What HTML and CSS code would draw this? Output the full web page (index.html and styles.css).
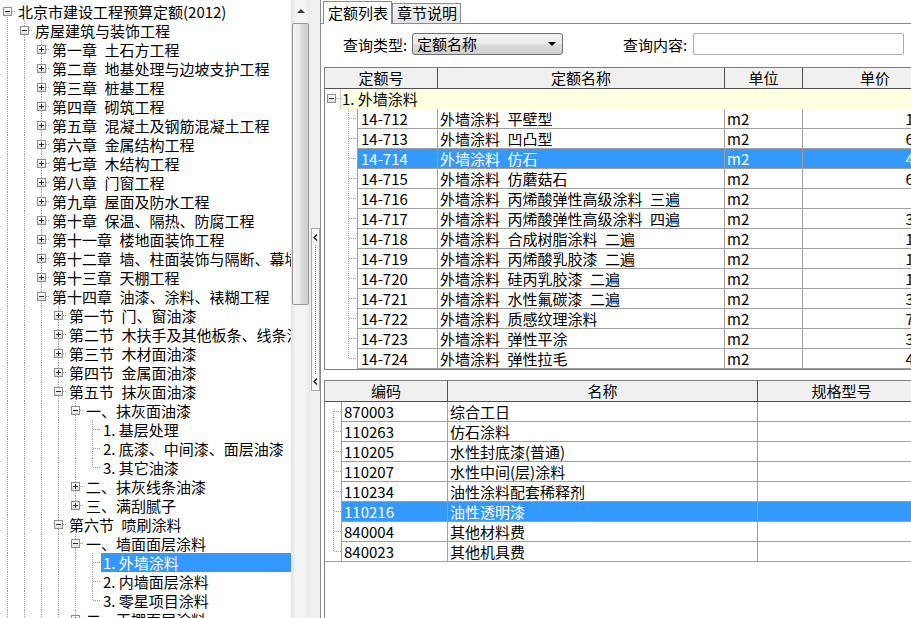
FILE: index.html
```html
<!DOCTYPE html>
<html lang="zh-CN">
<head>
<meta charset="utf-8">
<title>北京市建设工程预算定额</title>
<link rel="stylesheet" href="styles.css">
</head>
<body>
<div class="app">
  <div class="left">
    <div class="tree">
      <div class="row"><i class="n tl b"><b class="box minus"></b></i><span class="lbl">北京市建设工程预算定额(2012)</span></div>
      <div class="row"><i class="g on"></i><i class="n tl tb"><b class="box minus"></b></i><span class="lbl">房屋建筑与装饰工程</span></div>
      <div class="row"><i class="g on"></i><i class="g on"></i><i class="n tl tb"><b class="box plus"></b></i><span class="lbl">第一章&ensp;土石方工程</span></div>
      <div class="row"><i class="g on"></i><i class="g on"></i><i class="n tl tb"><b class="box plus"></b></i><span class="lbl">第二章&ensp;地基处理与边坡支护工程</span></div>
      <div class="row"><i class="g on"></i><i class="g on"></i><i class="n tl tb"><b class="box plus"></b></i><span class="lbl">第三章&ensp;桩基工程</span></div>
      <div class="row"><i class="g on"></i><i class="g on"></i><i class="n tl tb"><b class="box plus"></b></i><span class="lbl">第四章&ensp;砌筑工程</span></div>
      <div class="row"><i class="g on"></i><i class="g on"></i><i class="n tl tb"><b class="box plus"></b></i><span class="lbl">第五章&ensp;混凝土及钢筋混凝土工程</span></div>
      <div class="row"><i class="g on"></i><i class="g on"></i><i class="n tl tb"><b class="box plus"></b></i><span class="lbl">第六章&ensp;金属结构工程</span></div>
      <div class="row"><i class="g on"></i><i class="g on"></i><i class="n tl tb"><b class="box plus"></b></i><span class="lbl">第七章&ensp;木结构工程</span></div>
      <div class="row"><i class="g on"></i><i class="g on"></i><i class="n tl tb"><b class="box plus"></b></i><span class="lbl">第八章&ensp;门窗工程</span></div>
      <div class="row"><i class="g on"></i><i class="g on"></i><i class="n tl tb"><b class="box plus"></b></i><span class="lbl">第九章&ensp;屋面及防水工程</span></div>
      <div class="row"><i class="g on"></i><i class="g on"></i><i class="n tl tb"><b class="box plus"></b></i><span class="lbl">第十章&ensp;保温、隔热、防腐工程</span></div>
      <div class="row"><i class="g on"></i><i class="g on"></i><i class="n tl tb"><b class="box plus"></b></i><span class="lbl">第十一章&ensp;楼地面装饰工程</span></div>
      <div class="row"><i class="g on"></i><i class="g on"></i><i class="n tl tb"><b class="box plus"></b></i><span class="lbl">第十二章&ensp;墙、柱面装饰与隔断、幕墙工程</span></div>
      <div class="row"><i class="g on"></i><i class="g on"></i><i class="n tl tb"><b class="box plus"></b></i><span class="lbl">第十三章&ensp;天棚工程</span></div>
      <div class="row"><i class="g on"></i><i class="g on"></i><i class="n tl tb"><b class="box minus"></b></i><span class="lbl">第十四章&ensp;油漆、涂料、裱糊工程</span></div>
      <div class="row"><i class="g on"></i><i class="g on"></i><i class="g on"></i><i class="n tl tb"><b class="box plus"></b></i><span class="lbl">第一节&ensp;门、窗油漆</span></div>
      <div class="row"><i class="g on"></i><i class="g on"></i><i class="g on"></i><i class="n tl tb"><b class="box plus"></b></i><span class="lbl">第二节&ensp;木扶手及其他板条、线条油漆</span></div>
      <div class="row"><i class="g on"></i><i class="g on"></i><i class="g on"></i><i class="n tl tb"><b class="box plus"></b></i><span class="lbl">第三节&ensp;木材面油漆</span></div>
      <div class="row"><i class="g on"></i><i class="g on"></i><i class="g on"></i><i class="n tl tb"><b class="box plus"></b></i><span class="lbl">第四节&ensp;金属面油漆</span></div>
      <div class="row"><i class="g on"></i><i class="g on"></i><i class="g on"></i><i class="n tl tb"><b class="box minus"></b></i><span class="lbl">第五节&ensp;抹灰面油漆</span></div>
      <div class="row"><i class="g on"></i><i class="g on"></i><i class="g on"></i><i class="g on"></i><i class="n tl tb"><b class="box minus"></b></i><span class="lbl">一、抹灰面油漆</span></div>
      <div class="row"><i class="g on"></i><i class="g on"></i><i class="g on"></i><i class="g on"></i><i class="g on"></i><i class="n tl tb"></i><span class="lbl">1. 基层处理</span></div>
      <div class="row"><i class="g on"></i><i class="g on"></i><i class="g on"></i><i class="g on"></i><i class="g on"></i><i class="n tl tb"></i><span class="lbl">2. 底漆、中间漆、面层油漆</span></div>
      <div class="row"><i class="g on"></i><i class="g on"></i><i class="g on"></i><i class="g on"></i><i class="g on"></i><i class="n tl t"></i><span class="lbl">3. 其它油漆</span></div>
      <div class="row"><i class="g on"></i><i class="g on"></i><i class="g on"></i><i class="g on"></i><i class="n tl tb"><b class="box plus"></b></i><span class="lbl">二、抹灰线条油漆</span></div>
      <div class="row"><i class="g on"></i><i class="g on"></i><i class="g on"></i><i class="g on"></i><i class="n tl t"><b class="box plus"></b></i><span class="lbl">三、满刮腻子</span></div>
      <div class="row"><i class="g on"></i><i class="g on"></i><i class="g on"></i><i class="n tl tb"><b class="box minus"></b></i><span class="lbl">第六节&ensp;喷刷涂料</span></div>
      <div class="row"><i class="g on"></i><i class="g on"></i><i class="g on"></i><i class="g on"></i><i class="n tl tb"><b class="box minus"></b></i><span class="lbl">一、墙面面层涂料</span></div>
      <div class="row sel"><i class="g on"></i><i class="g on"></i><i class="g on"></i><i class="g on"></i><i class="g on"></i><i class="n tl tb"></i><span class="lbl">1. 外墙涂料</span></div>
      <div class="row"><i class="g on"></i><i class="g on"></i><i class="g on"></i><i class="g on"></i><i class="g on"></i><i class="n tl tb"></i><span class="lbl">2. 内墙面层涂料</span></div>
      <div class="row"><i class="g on"></i><i class="g on"></i><i class="g on"></i><i class="g on"></i><i class="g on"></i><i class="n tl t"></i><span class="lbl">3. 零星项目涂料</span></div>
      <div class="row"><i class="g on"></i><i class="g on"></i><i class="g on"></i><i class="g on"></i><i class="n tl tb"><b class="box plus"></b></i><span class="lbl">二、天棚面层涂料</span></div>
    </div>
    <div class="vscroll">
      <div class="sb-up"><span class="tri-up"></span></div>
      <div class="sb-thumb"></div>
    </div>
  </div>

  <div class="splitter">
    <div class="split-btn">
      <svg width="5" height="7" viewBox="0 0 5 7"><path d="M4 0.5 L1 3.5 L4 6.5" stroke="#1a1a1a" stroke-width="1.4" fill="none"/></svg>
      <span class="split-dots"></span>
      <svg width="5" height="7" viewBox="0 0 5 7"><path d="M4 0.5 L1 3.5 L4 6.5" stroke="#1a1a1a" stroke-width="1.4" fill="none"/></svg>
    </div>
  </div>

  <div class="right">
    <div class="tabs">
      <div class="tab active">定额列表</div>
      <div class="tab">章节说明</div>
    </div>
    <div class="tabpanel">
      <div class="query">
        <span class="qlabel">查询类型:</span>
        <div class="combo"><span class="combo-text">定额名称</span><span class="tri-down"></span></div>
        <span class="qlabel qlabel2">查询内容:</span>
        <div class="qinput"></div>
      </div>

      <div class="grid grid-top">
        <div class="hdr">
          <div class="hc" style="width:113px">定额号</div>
          <div class="hc" style="width:287px">定额名称</div>
          <div class="hc" style="width:78px">单位</div>
          <div class="hc" style="width:145px">单价</div>
        </div>
        <div class="grp">
          <div class="gtree"><b class="box minus"></b></div>
          <div class="gcell">1. 外墙涂料</div>
        </div>
        <div class="dr"><i class="tt tl tb"></i><div class="c code">14-712</div><div class="c name">外墙涂料&ensp;平壁型</div><div class="c unit">m2</div><div class="c price">14.76</div></div>
        <div class="dr"><i class="tt tl tb"></i><div class="c code">14-713</div><div class="c name">外墙涂料&ensp;凹凸型</div><div class="c unit">m2</div><div class="c price">63.85</div></div>
        <div class="dr sel"><i class="tt tl tb"></i><div class="c code">14-714</div><div class="c name">外墙涂料&ensp;仿石</div><div class="c unit">m2</div><div class="c price">45.21</div></div>
        <div class="dr"><i class="tt tl tb"></i><div class="c code">14-715</div><div class="c name">外墙涂料&ensp;仿蘑菇石</div><div class="c unit">m2</div><div class="c price">68.04</div></div>
        <div class="dr"><i class="tt tl tb"></i><div class="c code">14-716</div><div class="c name">外墙涂料&ensp;丙烯酸弹性高级涂料&ensp;三遍</div><div class="c unit">m2</div><div class="c price">9.56</div></div>
        <div class="dr"><i class="tt tl tb"></i><div class="c code">14-717</div><div class="c name">外墙涂料&ensp;丙烯酸弹性高级涂料&ensp;四遍</div><div class="c unit">m2</div><div class="c price">35.72</div></div>
        <div class="dr"><i class="tt tl tb"></i><div class="c code">14-718</div><div class="c name">外墙涂料&ensp;合成树脂涂料&ensp;二遍</div><div class="c unit">m2</div><div class="c price">18.40</div></div>
        <div class="dr"><i class="tt tl tb"></i><div class="c code">14-719</div><div class="c name">外墙涂料&ensp;丙烯酸乳胶漆&ensp;二遍</div><div class="c unit">m2</div><div class="c price">16.93</div></div>
        <div class="dr"><i class="tt tl tb"></i><div class="c code">14-720</div><div class="c name">外墙涂料&ensp;硅丙乳胶漆&ensp;二遍</div><div class="c unit">m2</div><div class="c price">17.25</div></div>
        <div class="dr"><i class="tt tl tb"></i><div class="c code">14-721</div><div class="c name">外墙涂料&ensp;水性氟碳漆&ensp;二遍</div><div class="c unit">m2</div><div class="c price">38.60</div></div>
        <div class="dr"><i class="tt tl tb"></i><div class="c code">14-722</div><div class="c name">外墙涂料&ensp;质感纹理涂料</div><div class="c unit">m2</div><div class="c price">72.18</div></div>
        <div class="dr"><i class="tt tl tb"></i><div class="c code">14-723</div><div class="c name">外墙涂料&ensp;弹性平涂</div><div class="c unit">m2</div><div class="c price">31.47</div></div>
        <div class="dr"><i class="tt tl t"></i><div class="c code">14-724</div><div class="c name">外墙涂料&ensp;弹性拉毛</div><div class="c unit">m2</div><div class="c price">42.90</div></div>
      </div>

      <div class="grid grid-bottom">
        <div class="hdr">
          <div class="hc" style="width:123px">编码</div>
          <div class="hc" style="width:310px">名称</div>
          <div class="hc" style="width:168px">规格型号</div>
        </div>
        <div class="dr"><i class="bt tl b"></i><div class="c bcode">870003</div><div class="c bname">综合工日</div><div class="c bspec"></div></div>
        <div class="dr"><i class="bt tl tb"></i><div class="c bcode">110263</div><div class="c bname">仿石涂料</div><div class="c bspec"></div></div>
        <div class="dr"><i class="bt tl tb"></i><div class="c bcode">110205</div><div class="c bname">水性封底漆(普通)</div><div class="c bspec"></div></div>
        <div class="dr"><i class="bt tl tb"></i><div class="c bcode">110207</div><div class="c bname">水性中间(层)涂料</div><div class="c bspec"></div></div>
        <div class="dr"><i class="bt tl tb"></i><div class="c bcode">110234</div><div class="c bname">油性涂料配套稀释剂</div><div class="c bspec"></div></div>
        <div class="dr sel"><i class="bt tl tb"></i><div class="c bcode">110216</div><div class="c bname">油性透明漆</div><div class="c bspec"></div></div>
        <div class="dr"><i class="bt tl tb"></i><div class="c bcode">840004</div><div class="c bname">其他材料费</div><div class="c bspec"></div></div>
        <div class="dr lastrow"><i class="bt tl t"></i><div class="c bcode">840023</div><div class="c bname">其他机具费</div><div class="c bspec"></div></div>
      </div>
    </div>
  </div>
</div>
</body>
</html>
```

FILE: styles.css
```css
html, body {
  margin: 0;
  padding: 0;
  overflow: hidden;
}

body {
  width: 911px;
  height: 618px;
  background: #f0f0f0;
  color: #000;
  font-family: "Noto Sans CJK SC", "Noto Sans", sans-serif;
  font-size: 15px;
  line-height: 19px;
}

.app {
  display: flex;
  height: 618px;
}

/* ---------- left tree ---------- */
.left {
  display: flex;
  flex: none;
  width: 310px;
  height: 618px;
}

.tree {
  width: 291px;
  height: 618px;
  box-sizing: border-box;
  padding-top: 2px;
  overflow: hidden;
  background: #fff;
  flex: none;
}

.row {
  display: flex;
  height: 19px;
  white-space: nowrap;
}

.g, .n {
  flex: none;
  height: 19px;
  position: relative;
  font-style: normal;
}

.g { width: 17px; }
.n { width: 16px; }

.g.on {
  background: repeating-linear-gradient(#a0a0a0 0 1px, transparent 1px 2px) 7px 0 / 1px 19px no-repeat;
}

/* dotted tree connector lines */
.tl {
  background-repeat: no-repeat;
  background-image:
    repeating-linear-gradient(90deg, #a0a0a0 0 1px, transparent 1px 2px),
    repeating-linear-gradient(#a0a0a0 0 1px, transparent 1px 2px);
  background-position: var(--hx) var(--cy), var(--vx) var(--vy);
  background-size: var(--hw) 1px, 1px var(--vh);
}

.n { --hx: 8px; --hw: 8px; --vx: 7px; --cy: 9px; }
.n.tb { --vy: 0px; --vh: 19px; }
.n.t  { --vy: 0px; --vh: 10px; }
.n.b  { --vy: 9px; --vh: 10px; }

.box {
  position: absolute;
  left: 3px;
  top: 5px;
  width: 9px;
  height: 9px;
  box-sizing: border-box;
  border: 1px solid #8e8e8e;
  background: linear-gradient(#ffffff, #dedede);
}

.box::before {
  content: "";
  position: absolute;
  left: 1px;
  top: 3px;
  width: 5px;
  height: 1px;
  background: #2a2a2a;
}

.box.plus::after {
  content: "";
  position: absolute;
  left: 3px;
  top: 1px;
  width: 1px;
  height: 5px;
  background: #2a2a2a;
}

.lbl {
  flex: 1 0 auto;
  padding: 0 2px;
  height: 19px;
  line-height: 19px;
}

.row.sel .lbl {
  background: #3399ff;
  color: #fff;
}

/* ---------- scrollbar ---------- */
.vscroll {
  width: 19px;
  height: 618px;
  flex: none;
  background: linear-gradient(90deg, #e3e3e3, #f4f4f4 25%, #f4f4f4 75%, #e8e8e8);
}

.sb-up {
  height: 21px;
  display: flex;
  align-items: center;
  justify-content: center;
}

.tri-up {
  width: 0;
  height: 0;
  border-left: 4px solid transparent;
  border-right: 4px solid transparent;
  border-bottom: 4px solid #3c3c3c;
}

.sb-thumb {
  margin: 2px 1px 0 1px;
  height: 282px;
  box-sizing: border-box;
  border: 1px solid #989898;
  border-radius: 2px;
  background: linear-gradient(90deg, #f4f4f4, #ebebeb 45%, #d9d9d9 55%, #cfcfcf);
}

/* ---------- splitter ---------- */
.splitter {
  width: 10px;
  flex: none;
  display: flex;
  align-items: center;
  background: #f0f0f0;
}

.split-btn {
  margin-left: 1px;
  width: 9px;
  height: 163px;
  box-sizing: border-box;
  border: 1px solid #a9a9a9;
  background: #f9f9f9;
  display: flex;
  flex-direction: column;
  align-items: center;
  padding: 5px 0;
}

.split-dots {
  flex: 1;
  width: 0;
  margin: 4px 0;
  border-left: 1px dotted #5b7fb8;
}

/* ---------- right panel ---------- */
.right {
  flex: none;
  width: 590px;
  height: 618px;
  border-left: 1px solid #898c95;
  background: #fff;
  display: flex;
  flex-direction: column;
  overflow: hidden;
}

.tabs {
  height: 23px;
  flex: none;
  display: flex;
  align-items: flex-end;
  padding-left: 2px;
}

.tab {
  box-sizing: border-box;
  height: 20px;
  line-height: 18px;
  padding: 0 3px 0 4px;
  border: 1px solid #898c95;
  border-bottom: none;
  background: linear-gradient(#f3f3f3, #e4e4e4);
  white-space: nowrap;
}

.tab.active {
  height: 23px;
  line-height: 21px;
  background: #fff;
  margin-bottom: -1px;
  position: relative;
}

.tabpanel {
  flex: 1;
  border-top: 1px solid #898c95;
  padding-left: 3px;
  display: flex;
  flex-direction: column;
  min-height: 0;
}

.query {
  display: flex;
  align-items: center;
  height: 22px;
  margin: 9px 0 12px 0;
  padding-left: 19px;
  flex: none;
}

.qlabel {
  width: 69px;
  flex: none;
  white-space: nowrap;
}

.qlabel2 {
  margin-left: 60px;
  width: 70px;
}

.combo {
  width: 151px;
  height: 22px;
  flex: none;
  box-sizing: border-box;
  border: 1px solid #707070;
  border-radius: 3px;
  background: linear-gradient(#f2f2f2, #ebebeb 50%, #dddddd 50%, #cfcfcf);
  display: flex;
  align-items: center;
  justify-content: space-between;
  padding: 0 6px 0 4px;
}

.combo-text {
  line-height: 18px;
}

.tri-down {
  width: 0;
  height: 0;
  border-left: 4px solid transparent;
  border-right: 4px solid transparent;
  border-top: 4px solid #000;
}

.qinput {
  width: 211px;
  height: 22px;
  flex: none;
  box-sizing: border-box;
  border: 1px solid #abadb3;
  border-radius: 2px;
  background: #fff;
}

/* ---------- grids ---------- */
.grid {
  width: 660px;
  flex: none;
  box-sizing: border-box;
  border: 1px solid #7f7f7f;
  background: #fff;
  overflow: hidden;
}

.grid-bottom {
  margin-top: 10px;
  flex: 1;
  border-bottom: none;
}

.hdr {
  display: flex;
  height: 21px;
  box-sizing: border-box;
  border-bottom: 1px solid #505050;
  background: #f0f0f0;
}

.hc {
  flex: none;
  box-sizing: border-box;
  height: 20px;
  line-height: 20px;
  border-right: 1px solid #505050;
  text-align: center;
  white-space: nowrap;
}

.grp {
  display: flex;
  height: 20px;
}

.gtree {
  width: 15px;
  flex: none;
  position: relative;
  background: repeating-linear-gradient(90deg, #a0a0a0 0 1px, transparent 1px 2px) 11px 9px / 4px 1px no-repeat;
}

.gtree .box {
  left: 2px;
  top: 5px;
}

.gcell {
  flex: 1;
  border-left: 1px solid #c8c8c8;
  background: #ffffe1;
  padding-left: 1px;
  line-height: 20px;
  white-space: nowrap;
}

.dr {
  display: flex;
  height: 20px;
}

.tt, .bt {
  flex: none;
  height: 20px;
  font-style: normal;
  --cy: 9px;
}

.tt { width: 32px; --vx: 23px; --hx: 24px; --hw: 8px; }
.bt { width: 16px; --vx: 8px; --hx: 9px; --hw: 7px; }

.tt.tb, .bt.tb { --vy: 0px; --vh: 20px; }
.tt.t, .bt.t { --vy: 0px; --vh: 10px; }
.tt.b, .bt.b { --vy: 9px; --vh: 11px; }

.c {
  flex: none;
  box-sizing: border-box;
  height: 20px;
  line-height: 19px;
  border-right: 1px solid #a0a0a0;
  border-bottom: 1px solid #a0a0a0;
  padding-left: 3px;
  white-space: nowrap;
  overflow: hidden;
}

.code { width: 81px; border-left: 1px solid #a0a0a0; }
.name { width: 287px; padding-left: 2px; }
.unit { width: 78px; padding-left: 2px; }
.price { width: 145px; text-align: right; padding-right: 4px; }

.bcode { width: 107px; border-left: 1px solid #a0a0a0; padding-left: 2px; }
.bname { width: 310px; padding-left: 2px; }
.bspec { width: 168px; }

.dr.sel .c {
  background: #3399ff;
  color: #fff;
}

.lastrow .bt {
  box-sizing: border-box;
  border-bottom: 1px solid #a0a0a0;
}
```
